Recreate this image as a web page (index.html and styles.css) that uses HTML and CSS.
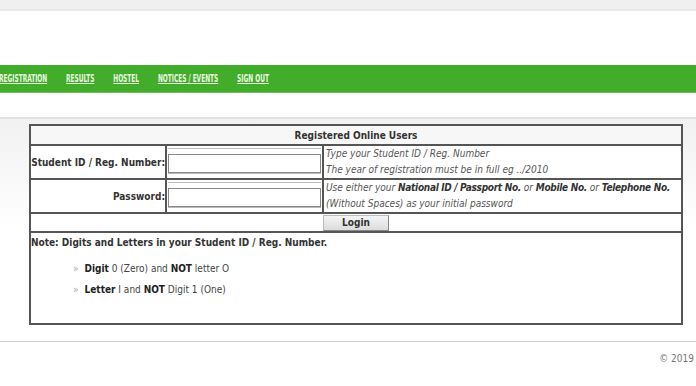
FILE: index.html
```html
<!DOCTYPE html>
<html>
<head>
    <title>Student Portal - Login</title>
    <link rel="stylesheet" href="styles.css">
</head>
<body>
    <div class="topstrip"></div>
    <div class="header"></div>
    <div class="menu">
        <ul>
            <li><a href="#">REGISTRATION</a></li>
            <li><a href="#">RESULTS</a></li>
            <li><a href="#">HOSTEL</a></li>
            <li><a href="#">NOTICES / EVENTS</a></li>
            <li><a href="#">SIGN OUT</a></li>
        </ul>
    </div>
    <div class="content">
        <table class="login">
            <colgroup>
                <col class="col-label">
                <col class="col-field">
                <col>
            </colgroup>
            <tr>
                <th colspan="3" class="title">Registered Online Users</th>
            </tr>
            <tr>
                <td class="label">Student ID / Reg. Number:</td>
                <td class="field"><div class="fieldbox"><input type="text"></div></td>
                <td class="hint">Type your Student ID / Reg. Number<br>The year of registration must be in full eg ../2010</td>
            </tr>
            <tr>
                <td class="label">Password:</td>
                <td class="field"><div class="fieldbox"><input type="password"></div></td>
                <td class="hint">Use either your <b>National ID / Passport No.</b> or <b>Mobile No.</b> or <b>Telephone No.</b><br>(Without Spaces) as your initial password</td>
            </tr>
            <tr>
                <td colspan="3" class="submit"><button type="button">Login</button></td>
            </tr>
            <tr>
                <td colspan="3" class="note">
                    <p class="note-title">Note: Digits and Letters in your Student ID / Reg. Number.</p>
                    <ul>
                        <li><b>Digit</b> 0 (Zero) and <b>NOT</b> letter O</li>
                        <li><b>Letter</b> I and <b>NOT</b> Digit 1 (One)</li>
                    </ul>
                </td>
            </tr>
        </table>
    </div>
    <div class="footer">&copy; 2019</div>
</body>
</html>
```

FILE: styles.css
```css
body {
    margin: 0;
    font-family: "DejaVu Sans Condensed", "DejaVu Sans", sans-serif;
    font-size: 10px;
    color: #333;
    background: #fff;
    overflow: hidden;
}
.topstrip {
    height: 9px;
    background-color: #f0f0f0;
    border-bottom: 2px solid #e8e8e8;
}
.header {
    height: 54px;
}
.menu {
    height: 27px;
    background-color: #41ad2a;
    border-bottom: 1px solid #6cc25a;
    overflow: hidden;
}
.menu ul {
    list-style: none;
    margin: 0 0 0 -1px;
    padding: 0;
    display: flex;
    gap: 29px;
    transform: scaleX(0.65);
    transform-origin: left center;
}
.menu a {
    display: block;
    line-height: 27px;
    color: #eaf9e0;
    font-weight: bold;
    font-size: 10px;
    white-space: nowrap;
    text-decoration: underline;
}
.content {
    margin-top: 24px;
    border-top: 2px solid #e2e2e2;
    padding: 5px 13px 16px 29px;
    background: linear-gradient(#f1f1f1, #fff 110px);
}
.login {
    width: 654px;
    table-layout: fixed;
    border-collapse: collapse;
    border: 2px solid #555;
    background: #fff;
}
.col-label {
    width: 136px;
}
.col-field {
    width: 157px;
}
.login th, .login td {
    border: 2px solid #555;
    padding: 0;
}
.title {
    height: 18px;
    background-color: #f7f7f7;
    font-weight: bold;
    color: #333;
}
.label {
    height: 32px;
    text-align: right;
    font-weight: bold;
    color: #333;
    white-space: nowrap;
}
.login .field {
    padding: 1px 1px 3px;
}
.fieldbox {
    border-top: 1px solid #bbb;
    border-bottom: 1px solid #bbb;
    padding-top: 5px;
}
.fieldbox input {
    display: block;
    box-sizing: border-box;
    width: 100%;
    height: 19px;
    margin: 0;
    border: 1px solid #888;
}
.login .hint {
    font-style: italic;
    color: #555;
    line-height: 16px;
    padding-left: 2px;
    white-space: nowrap;
    overflow: hidden;
}
.hint b {
    color: #333;
    letter-spacing: -0.3px;
}
.submit {
    height: 17px;
    text-align: center;
}
.submit button {
    width: 66px;
    height: 16px;
    padding: 0;
    font-family: inherit;
    font-size: 10px;
    font-weight: bold;
    color: #333;
    background: linear-gradient(#f4f4f4, #dcdcdc);
    border: 1px solid #bbb;
    border-right-color: #888;
    border-bottom-color: #888;
}
.note {
    height: 90px;
    vertical-align: top;
}
.note-title {
    margin: 4px 0 0;
    font-weight: bold;
    color: #333;
}
.note ul {
    list-style: none;
    margin: 10px 0 0;
    padding-left: 42px;
}
.note li {
    line-height: 21px;
    color: #444;
}
.note li::before {
    content: "\00bb";
    color: #aaa;
    margin-right: 6px;
}
.note li b {
    color: #222;
}
.footer {
    border-top: 1px solid #ccc;
    padding: 11px 2px 0 0;
    text-align: right;
    color: #777;
}
```
